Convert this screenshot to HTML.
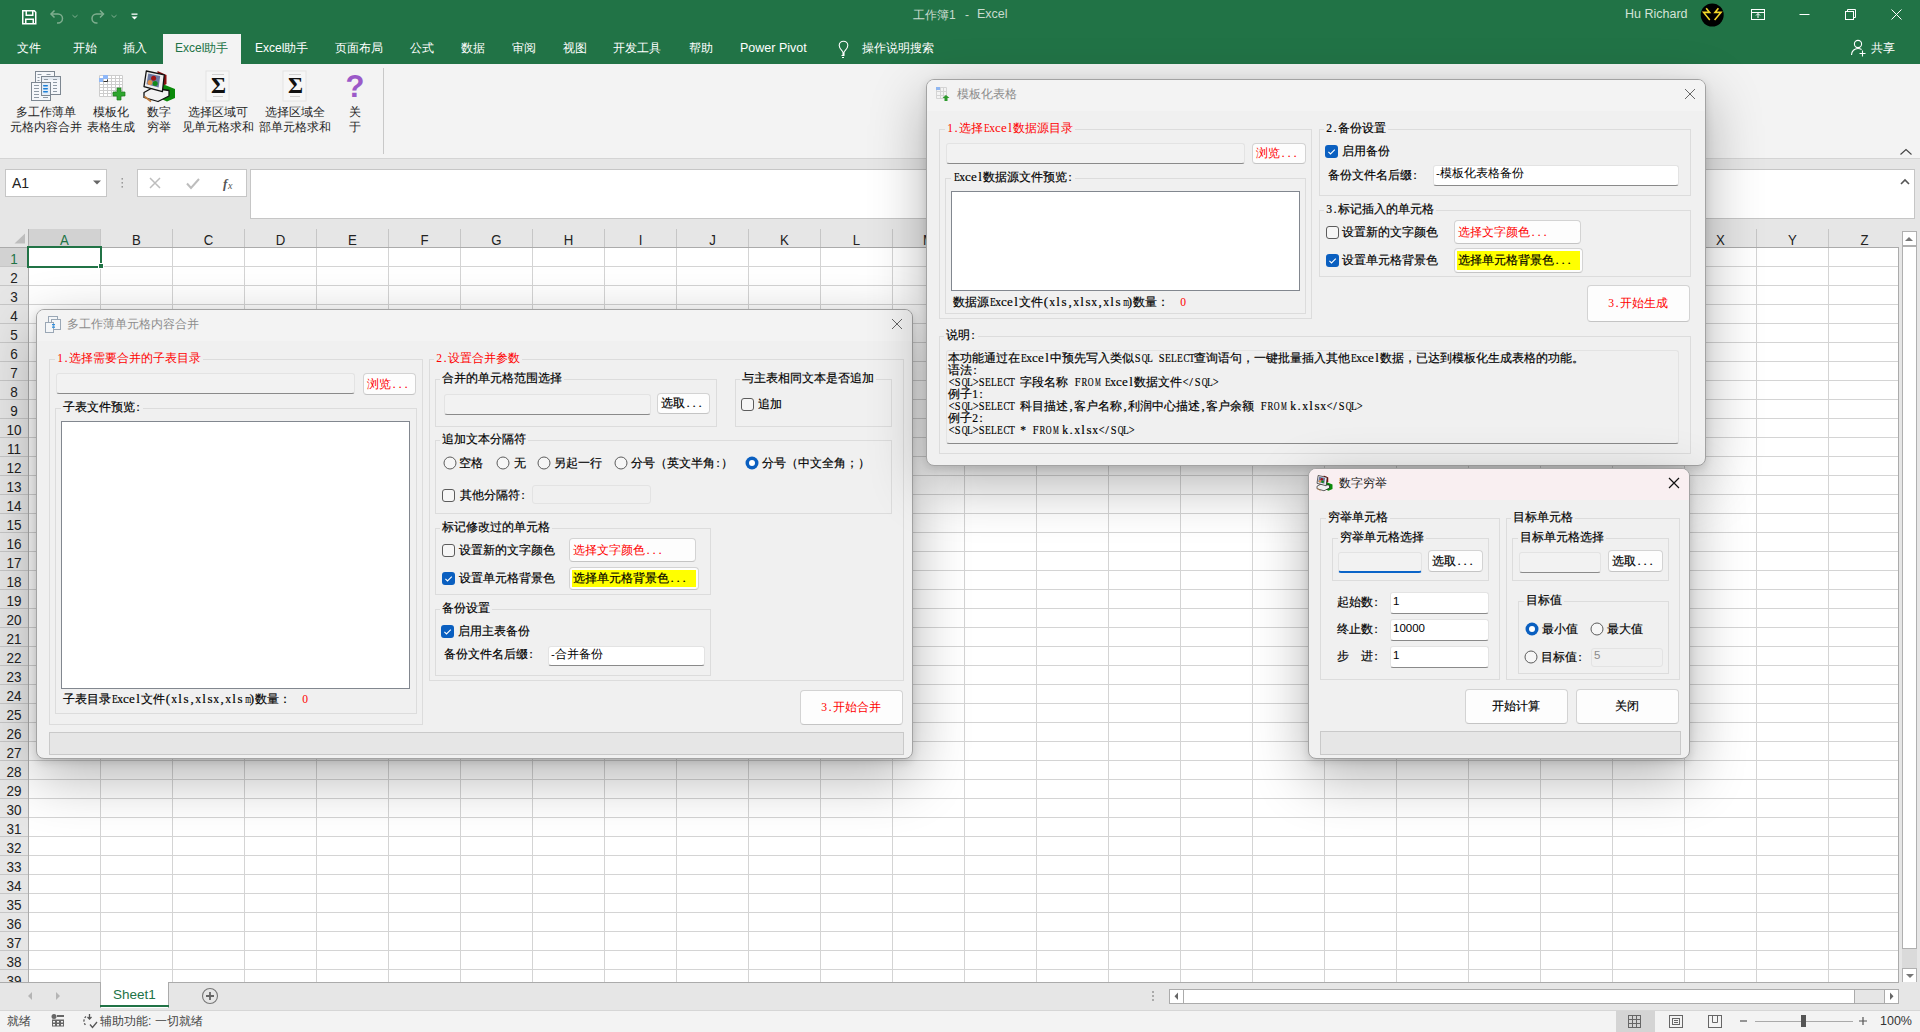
<!DOCTYPE html><html><head><meta charset="utf-8"><style>
*{margin:0;padding:0;box-sizing:border-box}
html,body{width:1920px;height:1032px;overflow:hidden;background:#fff;font-family:"Liberation Sans",sans-serif}
.b{position:absolute}
.t{position:absolute;white-space:nowrap}
.ss{-webkit-text-stroke:0.18px currentColor}
.red{-webkit-text-stroke:0}
.c{display:inline-block;width:6px;text-align:center;font-family:"Liberation Serif",serif;font-size:13px;line-height:12px;font-style:normal}
.c b{display:inline-block;font-weight:normal}
</style></head><body><div class="b" style="left:0px;top:0px;width:1920px;height:64px;background:#217346"></div>
<div class="b" style="left:163px;top:34px;width:78px;height:30px;background:#f3f3f3"></div>
<svg class="b" style="left:0;top:0" width="160" height="30" viewBox="0 0 160 30">
    <g fill="none" stroke="#fff" stroke-width="1.5">
      <path d="M22.75 10.75h11.5l1.5 1.5v11.5h-13z"/>
      <path d="M26.25 11v4.25h6.5V11"/><path d="M25.75 23.5v-4.25h7.5v4.25"/>
    </g>
    <g fill="none" stroke="#7fae8f" stroke-width="1.5">
      <path d="M54.5 10.5l-3.5 3.5 3.5 3.5"/><path d="M51.5 14h6.5a4.5 4.5 0 0 1 0 9h-1"/>
      <path d="M100 10.5l3.5 3.5-3.5 3.5"/><path d="M103 14h-6.5a4.5 4.5 0 0 0 0 9h1"/>
    </g>
    <g fill="none" stroke="#7fae8f" stroke-width="1"><path d="M72.5 15.2l2.5 2.2 2.5-2.2"/><path d="M111.5 15.2l2.5 2.2 2.5-2.2"/></g>
    <path d="M131.5 13.5h6v1.3h-6z" fill="#fff"/><path d="M131.5 16.5h6l-3 3z" fill="#fff"/>
    </svg>
<div class="t " style="left:913px;top:6.5px;font-size:12px;line-height:16px;color:#c9dbcf;">工作簿1</div>
<div class="t " style="left:965px;top:6.5px;font-size:12px;line-height:16px;color:#c9dbcf;">-</div>
<div class="t " style="left:977px;top:6.25px;font-size:12.5px;line-height:16.5px;color:#c9dbcf;">Excel</div>
<div class="t " style="left:1625px;top:6.25px;font-size:12.5px;line-height:16.5px;color:#d3e3d8;">Hu Richard</div>
<svg class="b" style="left:1700px;top:3px" width="25" height="25"><circle cx="12.2" cy="12" r="11.5" fill="#000"/>
      <g fill="none" stroke="#f2d52a" stroke-width="1.6" stroke-linejoin="miter"><path d="M6.2 5.2L9.6 9.4H3.6L9.8 17"/><path d="M18.4 5.2L15 9.4H21L14.6 17"/></g></svg>
<svg class="b" style="left:1740px;top:0" width="180" height="30"><g fill="none" stroke="#fff" stroke-width="1">
      <rect x="11.5" y="9.5" width="13" height="10"/><path d="M11.5 12.5h13"/><path d="M18 18v-4.5M16 15.5l2-2 2 2"/>
      <path d="M59.5 14.5h10"/>
      <rect x="105.5" y="11.5" width="8" height="8"/><path d="M107.5 11.5v-2h8v8h-2"/>
      <path d="M151.5 9.5l10 10M161.5 9.5l-10 10"/></g></svg>
<div class="t " style="left:17px;top:39.5px;font-size:12px;line-height:16px;color:#fff;">文件</div>
<div class="t " style="left:73px;top:39.5px;font-size:12px;line-height:16px;color:#fff;">开始</div>
<div class="t " style="left:123px;top:39.5px;font-size:12px;line-height:16px;color:#fff;">插入</div>
<div class="t " style="left:175px;top:39.5px;font-size:12px;line-height:16px;color:#217346;">Excel助手</div>
<div class="t " style="left:255px;top:39.5px;font-size:12px;line-height:16px;color:#fff;">Excel助手</div>
<div class="t " style="left:335px;top:39.5px;font-size:12px;line-height:16px;color:#fff;">页面布局</div>
<div class="t " style="left:410px;top:39.5px;font-size:12px;line-height:16px;color:#fff;">公式</div>
<div class="t " style="left:461px;top:39.5px;font-size:12px;line-height:16px;color:#fff;">数据</div>
<div class="t " style="left:512px;top:39.5px;font-size:12px;line-height:16px;color:#fff;">审阅</div>
<div class="t " style="left:563px;top:39.5px;font-size:12px;line-height:16px;color:#fff;">视图</div>
<div class="t " style="left:613px;top:39.5px;font-size:12px;line-height:16px;color:#fff;">开发工具</div>
<div class="t " style="left:689px;top:39.5px;font-size:12px;line-height:16px;color:#fff;">帮助</div>
<div class="t " style="left:740px;top:40.25px;font-size:12.5px;line-height:16.5px;color:#fff;">Power Pivot</div>
<div class="t " style="left:862px;top:39.5px;font-size:12px;line-height:16px;color:#fff;">操作说明搜索</div>
<svg class="b" style="left:834px;top:38px" width="20" height="22"><g fill="none" stroke="#fff" stroke-width="1.1">
      <path d="M9 17v-2.5c0-1.5-3.8-3.5-3.8-7a4.3 4.3 0 0 1 8.6 0c0 3.5-3.8 5.5-3.8 7V17"/><path d="M7.5 17.5h3M8 19.5h2"/></g></svg>
<svg class="b" style="left:1850px;top:38px" width="20" height="20"><g fill="none" stroke="#fff" stroke-width="1.1">
      <circle cx="8" cy="6" r="3.6"/><path d="M1.5 17c0-4 3-6.5 6.5-6.5 1.5 0 2.7.4 3.6 1"/><path d="M12.5 12.5v6M9.5 15.5h6"/></g></svg>
<div class="t " style="left:1871px;top:39.5px;font-size:12px;line-height:16px;color:#fff;">共享</div>
<div class="b" style="left:0px;top:64px;width:1920px;height:94px;background:#f3f3f3"></div>
<div class="b" style="left:0px;top:158px;width:1920px;height:1px;background:#d4d4d4"></div>
<div class="b" style="left:383px;top:68px;width:1px;height:86px;background:#c8c8c8"></div>
<div class="t" style="left:-14px;width:120px;text-align:center;top:105px;font-size:12px;line-height:15px;color:#262626">多工作薄单<br>元格内容合并</div>
<div class="t" style="left:51px;width:120px;text-align:center;top:105px;font-size:12px;line-height:15px;color:#262626">模板化<br>表格生成</div>
<div class="t" style="left:99px;width:120px;text-align:center;top:105px;font-size:12px;line-height:15px;color:#262626">数字<br>穷举</div>
<div class="t" style="left:158px;width:120px;text-align:center;top:105px;font-size:12px;line-height:15px;color:#262626">选择区域可<br>见单元格求和</div>
<div class="t" style="left:235px;width:120px;text-align:center;top:105px;font-size:12px;line-height:15px;color:#262626">选择区域全<br>部单元格求和</div>
<div class="t" style="left:295px;width:120px;text-align:center;top:105px;font-size:12px;line-height:15px;color:#262626">关<br>于</div>
<svg class="b" style="left:0;top:64px" width="380" height="44" viewBox="0 64 380 44">
    <!-- icon1: documents -->
    <g stroke="#7d8791" stroke-width="1" fill="#f5f7fa">
      <rect x="35.5" y="71.5" width="19" height="18"/></g>
    <g fill="#8e99a4"><rect x="37.5" y="74" width="4" height="1"/><rect x="46.5" y="74" width="4" height="1"/><rect x="37.5" y="77" width="2" height="1"/><rect x="37.5" y="80" width="2" height="1"/></g>
    <g stroke="#7d8791" stroke-width="1" fill="#f5f7fa"><rect x="41.5" y="76.5" width="19" height="18"/></g>
    <rect x="42" y="77" width="18" height="3" fill="#e3e9f0"/>
    <g fill="#8e99a4"><rect x="44" y="79" width="4" height="1"/><rect x="53" y="79" width="4" height="1"/><rect x="53" y="82" width="4" height="1"/><rect x="53" y="85" width="4" height="1"/><rect x="53" y="88" width="4" height="1"/><rect x="53" y="91" width="4" height="1"/></g>
    <g stroke="#7d8791" stroke-width="1" fill="#f5f7fa"><rect x="31.5" y="82.5" width="19" height="18"/></g>
    <rect x="41.5" y="82.5" width="9" height="13" fill="#f5f7fa" stroke="#7d8791"/>
    <rect x="42" y="83" width="8" height="12" fill="#e4edf7"/>
    <g fill="#8e99a4"><rect x="34" y="85" width="5" height="1"/><rect x="34" y="88" width="5" height="1"/><rect x="34" y="91" width="5" height="1"/><rect x="34" y="94" width="5" height="1"/><rect x="34" y="97" width="5" height="1"/><rect x="43" y="97" width="5" height="1"/></g>
    <g fill="#1c7fd6"><rect x="43" y="85" width="5" height="1.4" rx=".7"/><rect x="43" y="88" width="5" height="1.4" rx=".7"/><rect x="43" y="91" width="5" height="1.4" rx=".7"/></g>
    <!-- icon2: grid plus -->
    <rect x="99" y="75" width="24" height="22" fill="#fff"/>
    <g fill="none" stroke="#cdcdcd" stroke-width="1"><path d="M99.5 75.5h23v21h-23zM99.5 78.5h23M99.5 81.5h23M99.5 84.5h23M99.5 87.5h23M99.5 90.5h23M99.5 93.5h23M103.5 75.5v21M107.5 75.5v21M111.5 75.5v21M115.5 75.5v21M119.5 75.5v21"/></g>
    <rect x="103" y="75" width="5" height="4" fill="#8fb8f8"/><rect x="99" y="78" width="4" height="4" fill="#8fb8f8"/>
    <path d="M103.5 81.5h4v-2" stroke="#333" stroke-width="1" fill="none"/>
    <path d="M117 88h4v4h4v4h-4v4h-4v-4h-4v-4h4z" fill="#2ea62e" stroke="#1c7a1c" stroke-width=".7" stroke-linejoin="round"/>
    <!-- icon3: computer -->
    <path d="M157.5 71l9 4v9l-4 2.5-5-1z" fill="#8a0d0d"/>
    <path d="M162.5 84l12.5 5v9l-8 3.5-5.5-2.5z" fill="#0a8a0a"/>
    <path d="M144 92.5l8-4.5 17 2.5v5.5l-11 5.5-14-4z" fill="#f2f2f2" stroke="#111" stroke-width="1.3" stroke-linejoin="round"/>
    <path d="M144.5 96.5l6.5 5" stroke="#c07a3a" stroke-width="1.6"/>
    <path d="M146.3 71l18 3.8-1.9 16.8-18.4-5z" fill="#eeeeee" stroke="#111" stroke-width="1.3" stroke-linejoin="round"/>
    <path d="M148.3 73.6l11.9 2.5-1.6 11.5-12.1-3.4z" fill="#6b79a3"/>
    <circle cx="153.6" cy="78.3" r="2.5" fill="#a01515"/><circle cx="150" cy="82.4" r="2.5" fill="#e0904a"/><circle cx="155.2" cy="83.4" r="2.5" fill="#11881a"/>
    <!-- sigma icons -->
    <rect x="206" y="71" width="23" height="30" fill="#f6f6f6" stroke="#e4e4e4"/>
    <rect x="283" y="71" width="23" height="30" fill="#f6f6f6" stroke="#e4e4e4"/>
    <text x="218.5" y="93" text-anchor="middle" font-family="Liberation Serif" font-weight="bold" font-size="23" fill="#111">&#931;</text><g fill="#cfcfcf"><rect x="212" y="74" width="12" height="1"/><rect x="213" y="96" width="10" height="1"/><rect x="289" y="74" width="12" height="1"/><rect x="290" y="96" width="10" height="1"/></g>
    <text x="295.5" y="93" text-anchor="middle" font-family="Liberation Serif" font-weight="bold" font-size="23" fill="#111">&#931;</text>
    <!-- question -->
    <text x="355" y="96.5" text-anchor="middle" font-family="Liberation Sans" font-weight="bold" font-size="31" fill="#9b59c8">?</text>
    </svg>
<div class="b" style="left:1898px;top:148px;width:16px;height:8px;"></div>
<svg class="b" style="left:1898px;top:145px" width="16" height="12"><path d="M2.5 9.5l5.5-5 5.5 5" fill="none" stroke="#444" stroke-width="1.1"/></svg>
<div class="b" style="left:0px;top:159px;width:1920px;height:70px;background:#e6e6e6"></div>
<div class="b" style="left:5px;top:169px;width:102px;height:28px;background:#fff;border:1px solid #c6c6c6"></div>
<div class="t " style="left:12px;top:174.0px;font-size:14px;line-height:18px;color:#222;">A1</div>
<svg class="b" style="left:92px;top:179px" width="12" height="8"><path d="M1 1.5h8l-4 4z" fill="#666"/></svg>
<svg class="b" style="left:120px;top:177px" width="6" height="14"><g fill="#9a9a9a"><rect x="1.5" y="1" width="1.5" height="1.6"/><rect x="1.5" y="5" width="1.5" height="1.6"/><rect x="1.5" y="9" width="1.5" height="1.6"/></g></svg>
<div class="b" style="left:137px;top:169px;width:110px;height:28px;background:#fff;border:1px solid #c6c6c6"></div>
<svg class="b" style="left:137px;top:169px" width="110" height="28"><g fill="none" stroke="#bdbdbd" stroke-width="1.5">
      <path d="M13 9l10 10M23 9L13 19"/><path d="M50 14.5l4 4.5 8-9" stroke-width="2"/></g>
      <text x="86" y="19" font-family="Liberation Serif" font-style="italic" font-weight="bold" font-size="13" fill="#555">f</text>
      <text x="91" y="19.5" font-family="Liberation Serif" font-style="italic" font-size="10" fill="#555">x</text></svg>
<div class="b" style="left:250px;top:169px;width:1665px;height:50px;background:#fff;border:1px solid #c6c6c6"></div>
<svg class="b" style="left:1898px;top:176px" width="14" height="12"><path d="M3 8l4-4 4 4" fill="none" stroke="#555" stroke-width="1.6"/></svg>
<div class="b" style="left:0px;top:229px;width:1899px;height:19px;background:#e6e6e6"></div>
<div class="b" style="left:29px;top:229px;width:71px;height:18px;background:#d2d2d2"></div>
<div class="b" style="left:0px;top:247px;width:1899px;height:1px;background:#ababab"></div>
<svg class="b" style="left:0;top:229px" width="28" height="19"><path d="M25 4.5v10H14.5z" fill="#bdbdbd"/></svg>
<div class="b" style="left:28px;top:229px;width:1px;height:753px;background:#ababab"></div>
<div class="t" style="left:29px;width:71px;text-align:center;top:230.5px;font-size:15px;line-height:18px;transform:scaleX(.88);color:#217346">A</div>
<div class="b" style="left:100px;top:229px;width:1px;height:18px;background:#c6c6c6"></div>
<div class="t" style="left:101px;width:71px;text-align:center;top:230.5px;font-size:15px;line-height:18px;transform:scaleX(.88);color:#222">B</div>
<div class="b" style="left:172px;top:229px;width:1px;height:18px;background:#c6c6c6"></div>
<div class="t" style="left:173px;width:71px;text-align:center;top:230.5px;font-size:15px;line-height:18px;transform:scaleX(.88);color:#222">C</div>
<div class="b" style="left:244px;top:229px;width:1px;height:18px;background:#c6c6c6"></div>
<div class="t" style="left:245px;width:71px;text-align:center;top:230.5px;font-size:15px;line-height:18px;transform:scaleX(.88);color:#222">D</div>
<div class="b" style="left:316px;top:229px;width:1px;height:18px;background:#c6c6c6"></div>
<div class="t" style="left:317px;width:71px;text-align:center;top:230.5px;font-size:15px;line-height:18px;transform:scaleX(.88);color:#222">E</div>
<div class="b" style="left:388px;top:229px;width:1px;height:18px;background:#c6c6c6"></div>
<div class="t" style="left:389px;width:71px;text-align:center;top:230.5px;font-size:15px;line-height:18px;transform:scaleX(.88);color:#222">F</div>
<div class="b" style="left:460px;top:229px;width:1px;height:18px;background:#c6c6c6"></div>
<div class="t" style="left:461px;width:71px;text-align:center;top:230.5px;font-size:15px;line-height:18px;transform:scaleX(.88);color:#222">G</div>
<div class="b" style="left:532px;top:229px;width:1px;height:18px;background:#c6c6c6"></div>
<div class="t" style="left:533px;width:71px;text-align:center;top:230.5px;font-size:15px;line-height:18px;transform:scaleX(.88);color:#222">H</div>
<div class="b" style="left:604px;top:229px;width:1px;height:18px;background:#c6c6c6"></div>
<div class="t" style="left:605px;width:71px;text-align:center;top:230.5px;font-size:15px;line-height:18px;transform:scaleX(.88);color:#222">I</div>
<div class="b" style="left:676px;top:229px;width:1px;height:18px;background:#c6c6c6"></div>
<div class="t" style="left:677px;width:71px;text-align:center;top:230.5px;font-size:15px;line-height:18px;transform:scaleX(.88);color:#222">J</div>
<div class="b" style="left:748px;top:229px;width:1px;height:18px;background:#c6c6c6"></div>
<div class="t" style="left:749px;width:71px;text-align:center;top:230.5px;font-size:15px;line-height:18px;transform:scaleX(.88);color:#222">K</div>
<div class="b" style="left:820px;top:229px;width:1px;height:18px;background:#c6c6c6"></div>
<div class="t" style="left:821px;width:71px;text-align:center;top:230.5px;font-size:15px;line-height:18px;transform:scaleX(.88);color:#222">L</div>
<div class="b" style="left:892px;top:229px;width:1px;height:18px;background:#c6c6c6"></div>
<div class="t" style="left:893px;width:71px;text-align:center;top:230.5px;font-size:15px;line-height:18px;transform:scaleX(.88);color:#222">M</div>
<div class="b" style="left:964px;top:229px;width:1px;height:18px;background:#c6c6c6"></div>
<div class="t" style="left:965px;width:71px;text-align:center;top:230.5px;font-size:15px;line-height:18px;transform:scaleX(.88);color:#222">N</div>
<div class="b" style="left:1036px;top:229px;width:1px;height:18px;background:#c6c6c6"></div>
<div class="t" style="left:1037px;width:71px;text-align:center;top:230.5px;font-size:15px;line-height:18px;transform:scaleX(.88);color:#222">O</div>
<div class="b" style="left:1108px;top:229px;width:1px;height:18px;background:#c6c6c6"></div>
<div class="t" style="left:1109px;width:71px;text-align:center;top:230.5px;font-size:15px;line-height:18px;transform:scaleX(.88);color:#222">P</div>
<div class="b" style="left:1180px;top:229px;width:1px;height:18px;background:#c6c6c6"></div>
<div class="t" style="left:1181px;width:71px;text-align:center;top:230.5px;font-size:15px;line-height:18px;transform:scaleX(.88);color:#222">Q</div>
<div class="b" style="left:1252px;top:229px;width:1px;height:18px;background:#c6c6c6"></div>
<div class="t" style="left:1253px;width:71px;text-align:center;top:230.5px;font-size:15px;line-height:18px;transform:scaleX(.88);color:#222">R</div>
<div class="b" style="left:1324px;top:229px;width:1px;height:18px;background:#c6c6c6"></div>
<div class="t" style="left:1325px;width:71px;text-align:center;top:230.5px;font-size:15px;line-height:18px;transform:scaleX(.88);color:#222">S</div>
<div class="b" style="left:1396px;top:229px;width:1px;height:18px;background:#c6c6c6"></div>
<div class="t" style="left:1397px;width:71px;text-align:center;top:230.5px;font-size:15px;line-height:18px;transform:scaleX(.88);color:#222">T</div>
<div class="b" style="left:1468px;top:229px;width:1px;height:18px;background:#c6c6c6"></div>
<div class="t" style="left:1469px;width:71px;text-align:center;top:230.5px;font-size:15px;line-height:18px;transform:scaleX(.88);color:#222">U</div>
<div class="b" style="left:1540px;top:229px;width:1px;height:18px;background:#c6c6c6"></div>
<div class="t" style="left:1541px;width:71px;text-align:center;top:230.5px;font-size:15px;line-height:18px;transform:scaleX(.88);color:#222">V</div>
<div class="b" style="left:1612px;top:229px;width:1px;height:18px;background:#c6c6c6"></div>
<div class="t" style="left:1613px;width:71px;text-align:center;top:230.5px;font-size:15px;line-height:18px;transform:scaleX(.88);color:#222">W</div>
<div class="b" style="left:1684px;top:229px;width:1px;height:18px;background:#c6c6c6"></div>
<div class="t" style="left:1685px;width:71px;text-align:center;top:230.5px;font-size:15px;line-height:18px;transform:scaleX(.88);color:#222">X</div>
<div class="b" style="left:1756px;top:229px;width:1px;height:18px;background:#c6c6c6"></div>
<div class="t" style="left:1757px;width:71px;text-align:center;top:230.5px;font-size:15px;line-height:18px;transform:scaleX(.88);color:#222">Y</div>
<div class="b" style="left:1828px;top:229px;width:1px;height:18px;background:#c6c6c6"></div>
<div class="t" style="left:1829px;width:71px;text-align:center;top:230.5px;font-size:15px;line-height:18px;transform:scaleX(.88);color:#222">Z</div>
<div class="b" style="left:0px;top:248px;width:28px;height:734px;background:#e6e6e6"></div>
<div class="b" style="left:0px;top:248px;width:28px;height:18px;background:#d2d2d2"></div>
<div class="b" style="left:0px;top:266px;width:28px;height:1px;background:#c6c6c6"></div>
<div class="t" style="left:0;width:28px;text-align:center;top:249.5px;font-size:15px;line-height:18px;transform:scaleX(.9);color:#217346">1</div>
<div class="b" style="left:0px;top:285px;width:28px;height:1px;background:#c6c6c6"></div>
<div class="t" style="left:0;width:28px;text-align:center;top:268.5px;font-size:15px;line-height:18px;transform:scaleX(.9);color:#222">2</div>
<div class="b" style="left:0px;top:304px;width:28px;height:1px;background:#c6c6c6"></div>
<div class="t" style="left:0;width:28px;text-align:center;top:287.5px;font-size:15px;line-height:18px;transform:scaleX(.9);color:#222">3</div>
<div class="b" style="left:0px;top:323px;width:28px;height:1px;background:#c6c6c6"></div>
<div class="t" style="left:0;width:28px;text-align:center;top:306.5px;font-size:15px;line-height:18px;transform:scaleX(.9);color:#222">4</div>
<div class="b" style="left:0px;top:342px;width:28px;height:1px;background:#c6c6c6"></div>
<div class="t" style="left:0;width:28px;text-align:center;top:325.5px;font-size:15px;line-height:18px;transform:scaleX(.9);color:#222">5</div>
<div class="b" style="left:0px;top:361px;width:28px;height:1px;background:#c6c6c6"></div>
<div class="t" style="left:0;width:28px;text-align:center;top:344.5px;font-size:15px;line-height:18px;transform:scaleX(.9);color:#222">6</div>
<div class="b" style="left:0px;top:380px;width:28px;height:1px;background:#c6c6c6"></div>
<div class="t" style="left:0;width:28px;text-align:center;top:363.5px;font-size:15px;line-height:18px;transform:scaleX(.9);color:#222">7</div>
<div class="b" style="left:0px;top:399px;width:28px;height:1px;background:#c6c6c6"></div>
<div class="t" style="left:0;width:28px;text-align:center;top:382.5px;font-size:15px;line-height:18px;transform:scaleX(.9);color:#222">8</div>
<div class="b" style="left:0px;top:418px;width:28px;height:1px;background:#c6c6c6"></div>
<div class="t" style="left:0;width:28px;text-align:center;top:401.5px;font-size:15px;line-height:18px;transform:scaleX(.9);color:#222">9</div>
<div class="b" style="left:0px;top:437px;width:28px;height:1px;background:#c6c6c6"></div>
<div class="t" style="left:0;width:28px;text-align:center;top:420.5px;font-size:15px;line-height:18px;transform:scaleX(.9);color:#222">10</div>
<div class="b" style="left:0px;top:456px;width:28px;height:1px;background:#c6c6c6"></div>
<div class="t" style="left:0;width:28px;text-align:center;top:439.5px;font-size:15px;line-height:18px;transform:scaleX(.9);color:#222">11</div>
<div class="b" style="left:0px;top:475px;width:28px;height:1px;background:#c6c6c6"></div>
<div class="t" style="left:0;width:28px;text-align:center;top:458.5px;font-size:15px;line-height:18px;transform:scaleX(.9);color:#222">12</div>
<div class="b" style="left:0px;top:494px;width:28px;height:1px;background:#c6c6c6"></div>
<div class="t" style="left:0;width:28px;text-align:center;top:477.5px;font-size:15px;line-height:18px;transform:scaleX(.9);color:#222">13</div>
<div class="b" style="left:0px;top:513px;width:28px;height:1px;background:#c6c6c6"></div>
<div class="t" style="left:0;width:28px;text-align:center;top:496.5px;font-size:15px;line-height:18px;transform:scaleX(.9);color:#222">14</div>
<div class="b" style="left:0px;top:532px;width:28px;height:1px;background:#c6c6c6"></div>
<div class="t" style="left:0;width:28px;text-align:center;top:515.5px;font-size:15px;line-height:18px;transform:scaleX(.9);color:#222">15</div>
<div class="b" style="left:0px;top:551px;width:28px;height:1px;background:#c6c6c6"></div>
<div class="t" style="left:0;width:28px;text-align:center;top:534.5px;font-size:15px;line-height:18px;transform:scaleX(.9);color:#222">16</div>
<div class="b" style="left:0px;top:570px;width:28px;height:1px;background:#c6c6c6"></div>
<div class="t" style="left:0;width:28px;text-align:center;top:553.5px;font-size:15px;line-height:18px;transform:scaleX(.9);color:#222">17</div>
<div class="b" style="left:0px;top:589px;width:28px;height:1px;background:#c6c6c6"></div>
<div class="t" style="left:0;width:28px;text-align:center;top:572.5px;font-size:15px;line-height:18px;transform:scaleX(.9);color:#222">18</div>
<div class="b" style="left:0px;top:608px;width:28px;height:1px;background:#c6c6c6"></div>
<div class="t" style="left:0;width:28px;text-align:center;top:591.5px;font-size:15px;line-height:18px;transform:scaleX(.9);color:#222">19</div>
<div class="b" style="left:0px;top:627px;width:28px;height:1px;background:#c6c6c6"></div>
<div class="t" style="left:0;width:28px;text-align:center;top:610.5px;font-size:15px;line-height:18px;transform:scaleX(.9);color:#222">20</div>
<div class="b" style="left:0px;top:646px;width:28px;height:1px;background:#c6c6c6"></div>
<div class="t" style="left:0;width:28px;text-align:center;top:629.5px;font-size:15px;line-height:18px;transform:scaleX(.9);color:#222">21</div>
<div class="b" style="left:0px;top:665px;width:28px;height:1px;background:#c6c6c6"></div>
<div class="t" style="left:0;width:28px;text-align:center;top:648.5px;font-size:15px;line-height:18px;transform:scaleX(.9);color:#222">22</div>
<div class="b" style="left:0px;top:684px;width:28px;height:1px;background:#c6c6c6"></div>
<div class="t" style="left:0;width:28px;text-align:center;top:667.5px;font-size:15px;line-height:18px;transform:scaleX(.9);color:#222">23</div>
<div class="b" style="left:0px;top:703px;width:28px;height:1px;background:#c6c6c6"></div>
<div class="t" style="left:0;width:28px;text-align:center;top:686.5px;font-size:15px;line-height:18px;transform:scaleX(.9);color:#222">24</div>
<div class="b" style="left:0px;top:722px;width:28px;height:1px;background:#c6c6c6"></div>
<div class="t" style="left:0;width:28px;text-align:center;top:705.5px;font-size:15px;line-height:18px;transform:scaleX(.9);color:#222">25</div>
<div class="b" style="left:0px;top:741px;width:28px;height:1px;background:#c6c6c6"></div>
<div class="t" style="left:0;width:28px;text-align:center;top:724.5px;font-size:15px;line-height:18px;transform:scaleX(.9);color:#222">26</div>
<div class="b" style="left:0px;top:760px;width:28px;height:1px;background:#c6c6c6"></div>
<div class="t" style="left:0;width:28px;text-align:center;top:743.5px;font-size:15px;line-height:18px;transform:scaleX(.9);color:#222">27</div>
<div class="b" style="left:0px;top:779px;width:28px;height:1px;background:#c6c6c6"></div>
<div class="t" style="left:0;width:28px;text-align:center;top:762.5px;font-size:15px;line-height:18px;transform:scaleX(.9);color:#222">28</div>
<div class="b" style="left:0px;top:798px;width:28px;height:1px;background:#c6c6c6"></div>
<div class="t" style="left:0;width:28px;text-align:center;top:781.5px;font-size:15px;line-height:18px;transform:scaleX(.9);color:#222">29</div>
<div class="b" style="left:0px;top:817px;width:28px;height:1px;background:#c6c6c6"></div>
<div class="t" style="left:0;width:28px;text-align:center;top:800.5px;font-size:15px;line-height:18px;transform:scaleX(.9);color:#222">30</div>
<div class="b" style="left:0px;top:836px;width:28px;height:1px;background:#c6c6c6"></div>
<div class="t" style="left:0;width:28px;text-align:center;top:819.5px;font-size:15px;line-height:18px;transform:scaleX(.9);color:#222">31</div>
<div class="b" style="left:0px;top:855px;width:28px;height:1px;background:#c6c6c6"></div>
<div class="t" style="left:0;width:28px;text-align:center;top:838.5px;font-size:15px;line-height:18px;transform:scaleX(.9);color:#222">32</div>
<div class="b" style="left:0px;top:874px;width:28px;height:1px;background:#c6c6c6"></div>
<div class="t" style="left:0;width:28px;text-align:center;top:857.5px;font-size:15px;line-height:18px;transform:scaleX(.9);color:#222">33</div>
<div class="b" style="left:0px;top:893px;width:28px;height:1px;background:#c6c6c6"></div>
<div class="t" style="left:0;width:28px;text-align:center;top:876.5px;font-size:15px;line-height:18px;transform:scaleX(.9);color:#222">34</div>
<div class="b" style="left:0px;top:912px;width:28px;height:1px;background:#c6c6c6"></div>
<div class="t" style="left:0;width:28px;text-align:center;top:895.5px;font-size:15px;line-height:18px;transform:scaleX(.9);color:#222">35</div>
<div class="b" style="left:0px;top:931px;width:28px;height:1px;background:#c6c6c6"></div>
<div class="t" style="left:0;width:28px;text-align:center;top:914.5px;font-size:15px;line-height:18px;transform:scaleX(.9);color:#222">36</div>
<div class="b" style="left:0px;top:950px;width:28px;height:1px;background:#c6c6c6"></div>
<div class="t" style="left:0;width:28px;text-align:center;top:933.5px;font-size:15px;line-height:18px;transform:scaleX(.9);color:#222">37</div>
<div class="b" style="left:0px;top:969px;width:28px;height:1px;background:#c6c6c6"></div>
<div class="t" style="left:0;width:28px;text-align:center;top:952.5px;font-size:15px;line-height:18px;transform:scaleX(.9);color:#222">38</div>
<div class="b" style="left:0px;top:988px;width:28px;height:1px;background:#c6c6c6"></div>
<div class="t" style="left:0;width:28px;text-align:center;top:971.5px;font-size:15px;line-height:18px;transform:scaleX(.9);color:#222">39</div>
<div class="b" style="left:29px;top:248px;width:1870px;height:734px;background-color:#fff;background-image:linear-gradient(to right,transparent 71px,#d4d4d4 71px),linear-gradient(to bottom,transparent 18px,#d4d4d4 18px);background-size:72px 100%,100% 19px"></div>
<div class="b" style="left:27px;top:246px;width:75px;height:22px;border:2px solid #217346"></div>
<div class="b" style="left:98px;top:263px;width:6px;height:6px;background:#217346;border:1px solid #fff"></div>
<div class="b" style="left:1899px;top:229px;width:21px;height:753px;background:#e6e6e6"></div>
<div class="b" style="left:1902px;top:231px;width:15px;height:15px;background:#fff;border:1px solid #b0b0b0"></div>
<svg class="b" style="left:1902px;top:233px" width="14" height="12"><path d="M3 8l4-4 4 4z" fill="#777"/></svg>
<div class="b" style="left:1902px;top:248px;width:15px;height:720px;background:#dadada"></div>
<div class="b" style="left:1902px;top:246px;width:15px;height:703px;background:#fff;border:1px solid #b0b0b0"></div>
<div class="b" style="left:1902px;top:968px;width:15px;height:15px;background:#fff;border:1px solid #b0b0b0"></div>
<svg class="b" style="left:1903px;top:970px" width="14" height="12"><path d="M3 4h8l-4 4z" fill="#777"/></svg>
<div class="b" style="left:1898px;top:248px;width:1px;height:734px;background:#ababab"></div>
<div class="b" style="left:0px;top:982px;width:1920px;height:28px;background:#e6e6e6"></div>
<div class="b" style="left:0px;top:982px;width:1899px;height:1px;background:#ababab"></div>
<svg class="b" style="left:20px;top:988px" width="50" height="16"><path d="M12 4v8l-4-4z" fill="#b5b5b5"/><path d="M56 4v8l4-4z" fill="#b5b5b5" transform="translate(-0,0)"/></svg>
<svg class="b" style="left:50px;top:988px" width="16" height="16"><path d="M6 4v8l4-4z" fill="#b5b5b5"/></svg>
<div class="b" style="left:100px;top:982px;width:69px;height:26px;background:#fff;border-left:1px solid #ababab;border-right:1px solid #ababab"></div>
<div class="b" style="left:100px;top:1005px;width:69px;height:2px;background:#217346"></div>
<div class="t " style="left:113px;top:986.25px;font-size:13.5px;line-height:17.5px;color:#217346;">Sheet1</div>
<svg class="b" style="left:200px;top:986px" width="20" height="20"><circle cx="10" cy="10" r="7.5" fill="none" stroke="#777" stroke-width="1.1"/><path d="M10 6v8M6 10h8" stroke="#666" stroke-width="1.8"/></svg>
<svg class="b" style="left:1148px;top:988px" width="10" height="16"><g fill="#aaa"><rect x="4" y="3" width="2" height="2"/><rect x="4" y="7" width="2" height="2"/><rect x="4" y="11" width="2" height="2"/></g></svg>
<div class="b" style="left:1169px;top:989px;width:730px;height:15px;background:#e6e6e6;border:1px solid #ababab"></div>
<div class="b" style="left:1183px;top:989px;width:672px;height:15px;background:#fff;border:1px solid #ababab"></div>
<div class="b" style="left:1169px;top:989px;width:15px;height:15px;background:#fff;border:1px solid #ababab"></div>
<div class="b" style="left:1884px;top:989px;width:15px;height:15px;background:#fff;border:1px solid #ababab"></div>
<svg class="b" style="left:1169px;top:989px" width="15" height="15"><path d="M9 3.5v7.5l-3.5-3.75z" fill="#666"/></svg>
<svg class="b" style="left:1884px;top:989px" width="15" height="15"><path d="M6 3.5v7.5l3.5-3.75z" fill="#666"/></svg>
<div class="b" style="left:0px;top:1010px;width:1920px;height:22px;background:#f3f3f3"></div>
<div class="b" style="left:0px;top:1010px;width:1920px;height:1px;background:#d6d6d6"></div>
<div class="t " style="left:7px;top:1013.0px;font-size:12px;line-height:16px;color:#444;">就绪</div>
<svg class="b" style="left:50px;top:1013px" width="16" height="16"><g fill="#666"><circle cx="4" cy="3.5" r="2.5"/><path d="M7 2h7v2H7zM2 6.5h12v7H2z"/></g><g fill="#f3f3f3"><rect x="3" y="8" width="2" height="1.5"/><rect x="7" y="8" width="2" height="1.5"/><rect x="11" y="8" width="2" height="1.5"/><rect x="3" y="11" width="2" height="1.5"/><rect x="7" y="11" width="2" height="1.5"/><rect x="11" y="11" width="2" height="1.5"/></g></svg>
<svg class="b" style="left:81px;top:1012px" width="18" height="18"><g fill="none" stroke="#555" stroke-width="1.3"><path d="M5 4.5a6 6 0 0 0 0 9" stroke-dasharray="2 1.5"/><path d="M8.5 2v5M6.5 5l2 2 2-2"/><path d="M9 12.5l2.5 3 4.5-5.5"/></g></svg>
<div class="t " style="left:100px;top:1013.0px;font-size:12px;line-height:16px;color:#444;">辅助功能: 一切就绪</div>
<div class="b" style="left:1616px;top:1011px;width:39px;height:21px;background:#d4d4d4"></div>
<svg class="b" style="left:1622px;top:1010px" width="110" height="22"><g fill="none" stroke="#666" stroke-width="1">
      <rect x="6.5" y="5.5" width="12" height="12"/><path d="M6.5 9.5h12M6.5 13.5h12M10.5 5.5v12M14.5 5.5v12"/>
      <rect x="47.5" y="5.5" width="13" height="12"/><rect x="50.5" y="8.5" width="7" height="6"/><path d="M52 10.5h4M52 12.5h4"/>
      <rect x="86.5" y="5.5" width="13" height="12"/><path d="M90.5 5.5v7h5v-7"/></g></svg>
<svg class="b" style="left:1736px;top:1010px" width="140" height="22"><g stroke="#555" stroke-width="1.2" fill="none">
      <path d="M4 11h7"/><path d="M123 11h8M127 7v8"/></g><path d="M19 11.5h98" stroke="#aaa" stroke-width="1"/><rect x="65" y="5" width="5" height="12" fill="#555"/></svg>
<div class="t " style="left:1880px;top:1012.75px;font-size:12.5px;line-height:16.5px;color:#333;">100%</div>
<div class="b" style="left:36px;top:309px;width:877px;height:450px;background:#f0f0f0;border:1px solid #a3a3a3;border-radius:8px;box-shadow:0 18px 56px rgba(0,0,0,0.30),0 3px 9px rgba(0,0,0,0.13);overflow:hidden"><div class="b" style="left:0;top:0;right:0;height:31px;background:#f3f3f3"></div></div>
<div class="t " style="left:67px;top:315.5px;font-size:12px;line-height:16px;color:#8c8c8c;">多工作薄单元格内容合并</div>
<svg class="b" style="left:45px;top:316px" width="18" height="18"><g stroke="#9aa7b5" stroke-width="1" fill="#f4f6f8">
    <rect x="3.5" y="0.5" width="9" height="11"/><rect x="6.5" y="3.5" width="9" height="10"/><rect x="0.5" y="6.5" width="8" height="10"/></g>
    <g fill="#2f8fe0"><rect x="7" y="8" width="3" height="1.3"/><rect x="7" y="10.5" width="3" height="1.3"/></g></svg>
<svg class="b" style="left:891px;top:318px" width="12" height="12"><path d="M1 1l10 10M11 1L1 11" stroke="#666" stroke-width="1"/></svg>
<div class="b" style="left:49px;top:359px;width:374px;height:366px;border:1px solid #dcdcdc"></div>
<div class="b" style="left:55px;top:353px;width:148px;height:12px;background:#f0f0f0"></div>
<div class="t ss red" style="left:57px;top:350.0px;font-size:12px;line-height:16px;color:#ff0000;"><i class="c"><b style="transform:scaleX(0.89)">1</b></i><i class="c"><b>.</b></i>选择需要合并的子表目录</div>
<div class="b" style="left:56px;top:373px;width:299px;height:21px;background:#f2f2f2;border:1px solid #e3e3e3;border-bottom:1px solid #8a8a8a;border-radius:3px"></div>
<div class="b" style="left:363px;top:373px;width:53px;height:22px;background:#fdfdfd;border:1px solid #d3d3d3;border-bottom-color:#c4c4c4;border-radius:4px"></div>
<div class="t ss red" style="left:367px;top:375.5px;font-size:12px;line-height:16px;color:#ff0000;">浏览<i class="c"><b>.</b></i><i class="c"><b>.</b></i><i class="c"><b>.</b></i></div>
<div class="b" style="left:55px;top:408px;width:362px;height:306px;border:1px solid #dcdcdc"></div>
<div class="b" style="left:61px;top:402px;width:82px;height:12px;background:#f0f0f0"></div>
<div class="t ss" style="left:63px;top:399.0px;font-size:12px;line-height:16px;color:#000;">子表文件预览<i class="c"><b>:</b></i></div>
<div class="b" style="left:61px;top:421px;width:349px;height:268px;background:#fff;border:1px solid #82878f"></div>
<div class="t ss" style="left:63px;top:691.0px;font-size:12px;line-height:16px;color:#000;">子表目录<i class="c"><b style="transform:scaleX(0.73)">E</b></i><i class="c"><b style="transform:scaleX(0.89)">x</b></i><i class="c"><b>c</b></i><i class="c"><b>e</b></i><i class="c"><b>l</b></i>文件<i class="c"><b>(</b></i><i class="c"><b style="transform:scaleX(0.89)">x</b></i><i class="c"><b>l</b></i><i class="c"><b>s</b></i><i class="c"><b>,</b></i><i class="c"><b style="transform:scaleX(0.89)">x</b></i><i class="c"><b>l</b></i><i class="c"><b>s</b></i><i class="c"><b style="transform:scaleX(0.89)">x</b></i><i class="c"><b>,</b></i><i class="c"><b style="transform:scaleX(0.89)">x</b></i><i class="c"><b>l</b></i><i class="c"><b>s</b></i><i class="c"><b style="transform:scaleX(0.57)">m</b></i><i class="c"><b>)</b></i>数量：</div>
<div class="t ss red" style="left:302px;top:691.0px;font-size:12px;line-height:16px;color:#ff0000;"><i class="c"><b style="transform:scaleX(0.89)">0</b></i></div>
<div class="b" style="left:429px;top:359px;width:475px;height:322px;border:1px solid #dcdcdc"></div>
<div class="b" style="left:434px;top:353px;width:88px;height:12px;background:#f0f0f0"></div>
<div class="t ss red" style="left:436px;top:350.0px;font-size:12px;line-height:16px;color:#ff0000;"><i class="c"><b style="transform:scaleX(0.89)">2</b></i><i class="c"><b>.</b></i>设置合并参数</div>
<div class="b" style="left:435px;top:379px;width:282px;height:48px;border:1px solid #dcdcdc"></div>
<div class="b" style="left:440px;top:373px;width:124px;height:12px;background:#f0f0f0"></div>
<div class="t ss" style="left:442px;top:370.0px;font-size:12px;line-height:16px;color:#000;">合并的单元格范围选择</div>
<div class="b" style="left:444px;top:394px;width:207px;height:21px;background:#f2f2f2;border:1px solid #e3e3e3;border-bottom:1px solid #8a8a8a;border-radius:3px"></div>
<div class="b" style="left:657px;top:393px;width:53px;height:21px;background:#fdfdfd;border:1px solid #d3d3d3;border-bottom-color:#c4c4c4;border-radius:4px"></div>
<div class="t ss" style="left:661px;top:395.0px;font-size:12px;line-height:16px;color:#000;">选取<i class="c"><b>.</b></i><i class="c"><b>.</b></i><i class="c"><b>.</b></i></div>
<div class="b" style="left:735px;top:379px;width:157px;height:48px;border:1px solid #dcdcdc"></div>
<div class="b" style="left:740px;top:373px;width:136px;height:12px;background:#f0f0f0"></div>
<div class="t ss" style="left:742px;top:370.0px;font-size:12px;line-height:16px;color:#000;">与主表相同文本是否追加</div>
<svg class="b" style="left:741px;top:398px" width="13" height="13"><rect x="0.5" y="0.5" width="12" height="12" rx="2.5" fill="#f6f6f6" stroke="#5c5c5c"/></svg>
<div class="t ss" style="left:758px;top:396.0px;font-size:12px;line-height:16px;color:#000;">追加</div>
<div class="b" style="left:435px;top:440px;width:457px;height:74px;border:1px solid #dcdcdc"></div>
<div class="b" style="left:440px;top:434px;width:88px;height:12px;background:#f0f0f0"></div>
<div class="t ss" style="left:442px;top:431.0px;font-size:12px;line-height:16px;color:#000;">追加文本分隔符</div>
<svg class="b" style="left:443px;top:456px" width="14" height="14"><circle cx="7" cy="7" r="6" fill="#f6f6f6" stroke="#5c5c5c"/></svg>
<div class="t ss" style="left:459px;top:455.0px;font-size:12px;line-height:16px;color:#000;">空格</div>
<svg class="b" style="left:496px;top:456px" width="14" height="14"><circle cx="7" cy="7" r="6" fill="#f6f6f6" stroke="#5c5c5c"/></svg>
<div class="t ss" style="left:514px;top:455.0px;font-size:12px;line-height:16px;color:#000;">无</div>
<svg class="b" style="left:537px;top:456px" width="14" height="14"><circle cx="7" cy="7" r="6" fill="#f6f6f6" stroke="#5c5c5c"/></svg>
<div class="t ss" style="left:554px;top:455.0px;font-size:12px;line-height:16px;color:#000;">另起一行</div>
<svg class="b" style="left:614px;top:456px" width="14" height="14"><circle cx="7" cy="7" r="6" fill="#f6f6f6" stroke="#5c5c5c"/></svg>
<div class="t ss" style="left:631px;top:455.0px;font-size:12px;line-height:16px;color:#000;">分号（英文半角<i class="c"><b>:</b></i>）</div>
<svg class="b" style="left:745px;top:456px" width="14" height="14"><circle cx="7" cy="7" r="6.5" fill="#0a5fc0"/><circle cx="7" cy="7" r="3" fill="#fff"/></svg>
<div class="t ss" style="left:762px;top:455.0px;font-size:12px;line-height:16px;color:#000;">分号（中文全角；）</div>
<svg class="b" style="left:442px;top:489px" width="13" height="13"><rect x="0.5" y="0.5" width="12" height="12" rx="2.5" fill="#f6f6f6" stroke="#5c5c5c"/></svg>
<div class="t ss" style="left:460px;top:487.0px;font-size:12px;line-height:16px;color:#000;">其他分隔符<i class="c"><b>:</b></i></div>
<div class="b" style="left:532px;top:485px;width:119px;height:19px;background:#f0f0f0;border:1px solid #e3e3e3;border-bottom:1px solid #e3e3e3;border-radius:3px"></div>
<div class="b" style="left:435px;top:528px;width:276px;height:67px;border:1px solid #dcdcdc"></div>
<div class="b" style="left:440px;top:522px;width:112px;height:12px;background:#f0f0f0"></div>
<div class="t ss" style="left:442px;top:519.0px;font-size:12px;line-height:16px;color:#000;">标记修改过的单元格</div>
<svg class="b" style="left:442px;top:544px" width="13" height="13"><rect x="0.5" y="0.5" width="12" height="12" rx="2.5" fill="#f6f6f6" stroke="#5c5c5c"/></svg>
<div class="t ss" style="left:459px;top:542.0px;font-size:12px;line-height:16px;color:#000;">设置新的文字颜色</div>
<div class="b" style="left:569px;top:538px;width:127px;height:24px;background:#fdfdfd;border:1px solid #d3d3d3;border-bottom-color:#c4c4c4;border-radius:4px"></div>
<div class="t ss red" style="left:573px;top:541.5px;font-size:12px;line-height:16px;color:#ff0000;">选择文字颜色<i class="c"><b>.</b></i><i class="c"><b>.</b></i><i class="c"><b>.</b></i></div>
<svg class="b" style="left:442px;top:572px" width="13" height="13"><rect x="0" y="0" width="13" height="13" rx="3" fill="#0a5fc0"/><path d="M3.4 6.8l2.1 2.1 4.3-4.3" fill="none" stroke="#fff" stroke-width="1.1"/></svg>
<div class="t ss" style="left:459px;top:570.0px;font-size:12px;line-height:16px;color:#000;">设置单元格背景色</div>
<div class="b" style="left:569px;top:567px;width:130px;height:23px;background:#fdfdfd;border:1px solid #d3d3d3;border-bottom-color:#c4c4c4;border-radius:4px"></div>
<div class="b" style="left:572px;top:570px;width:124px;height:17px;background:#ffff00"></div>
<div class="t ss" style="left:573px;top:570.0px;font-size:12px;line-height:16px;color:#000;">选择单元格背景色<i class="c"><b>.</b></i><i class="c"><b>.</b></i><i class="c"><b>.</b></i></div>
<div class="b" style="left:435px;top:609px;width:276px;height:67px;border:1px solid #dcdcdc"></div>
<div class="b" style="left:440px;top:603px;width:52px;height:12px;background:#f0f0f0"></div>
<div class="t ss" style="left:442px;top:600.0px;font-size:12px;line-height:16px;color:#000;">备份设置</div>
<svg class="b" style="left:441px;top:625px" width="13" height="13"><rect x="0" y="0" width="13" height="13" rx="3" fill="#0a5fc0"/><path d="M3.4 6.8l2.1 2.1 4.3-4.3" fill="none" stroke="#fff" stroke-width="1.1"/></svg>
<div class="t ss" style="left:458px;top:623.0px;font-size:12px;line-height:16px;color:#000;">启用主表备份</div>
<div class="t ss" style="left:444px;top:646.0px;font-size:12px;line-height:16px;color:#000;">备份文件名后缀<i class="c"><b>:</b></i></div>
<div class="b" style="left:548px;top:646px;width:157px;height:20px;background:#fff;border:1px solid #e3e3e3;border-bottom:1px solid #8a8a8a;border-radius:3px"></div>
<div class="t " style="left:551px;top:646.75px;font-size:11.5px;line-height:15.5px;color:#000;">-合并备份</div>
<div class="b" style="left:800px;top:690px;width:103px;height:35px;background:#fdfdfd;border:1px solid #d3d3d3;border-bottom-color:#c4c4c4;border-radius:4px"></div>
<div class="t ss red" style="left:821.0px;top:699.0px;font-size:12px;line-height:16px;color:#ff0000;"><i class="c"><b style="transform:scaleX(0.89)">3</b></i><i class="c"><b>.</b></i>开始合并</div>
<div class="b" style="left:49px;top:732px;width:855px;height:23px;background:#e6e6e6;border:1px solid #c9c9c9"></div>
<div class="b" style="left:926px;top:79px;width:780px;height:387px;background:#f0f0f0;border:1px solid #a3a3a3;border-radius:8px;box-shadow:0 18px 56px rgba(0,0,0,0.30),0 3px 9px rgba(0,0,0,0.13);overflow:hidden"><div class="b" style="left:0;top:0;right:0;height:31px;background:#f3f3f3"></div></div>
<div class="t " style="left:957px;top:85.5px;font-size:12px;line-height:16px;color:#8c8c8c;">模板化表格</div>
<svg class="b" style="left:935px;top:86px" width="18" height="18"><g fill="none" stroke="#d4d4d4" stroke-width="1">
    <path d="M1.5 1.5h10v11h-10zM1.5 5.5h10M1.5 9.5h10M5.5 1.5v11M8.5 1.5v11"/></g><rect x="1" y="1" width="4" height="3" fill="#8fb6f0"/>
    <path d="M11 9l3.5 3h-2v3h-3v-3h-2z" fill="#2c9a2c"/></svg>
<svg class="b" style="left:1684px;top:88px" width="12" height="12"><path d="M1 1l10 10M11 1L1 11" stroke="#666" stroke-width="1"/></svg>
<div class="b" style="left:939px;top:129px;width:373px;height:190px;border:1px solid #dcdcdc"></div>
<div class="b" style="left:945px;top:123px;width:130px;height:12px;background:#f0f0f0"></div>
<div class="t ss red" style="left:947px;top:120.0px;font-size:12px;line-height:16px;color:#ff0000;"><i class="c"><b style="transform:scaleX(0.89)">1</b></i><i class="c"><b>.</b></i>选择<i class="c"><b style="transform:scaleX(0.73)">E</b></i><i class="c"><b style="transform:scaleX(0.89)">x</b></i><i class="c"><b>c</b></i><i class="c"><b>e</b></i><i class="c"><b>l</b></i>数据源目录</div>
<div class="b" style="left:946px;top:143px;width:299px;height:21px;background:#f2f2f2;border:1px solid #e3e3e3;border-bottom:1px solid #8a8a8a;border-radius:3px"></div>
<div class="b" style="left:1252px;top:143px;width:54px;height:21px;background:#fdfdfd;border:1px solid #d3d3d3;border-bottom-color:#c4c4c4;border-radius:4px"></div>
<div class="t ss red" style="left:1256px;top:145.0px;font-size:12px;line-height:16px;color:#ff0000;">浏览<i class="c"><b>.</b></i><i class="c"><b>.</b></i><i class="c"><b>.</b></i></div>
<div class="b" style="left:945px;top:178px;width:361px;height:136px;border:1px solid #dcdcdc"></div>
<div class="b" style="left:951px;top:172px;width:124px;height:12px;background:#f0f0f0"></div>
<div class="t ss" style="left:953px;top:169.0px;font-size:12px;line-height:16px;color:#000;"><i class="c"><b style="transform:scaleX(0.73)">E</b></i><i class="c"><b style="transform:scaleX(0.89)">x</b></i><i class="c"><b>c</b></i><i class="c"><b>e</b></i><i class="c"><b>l</b></i>数据源文件预览<i class="c"><b>:</b></i></div>
<div class="b" style="left:951px;top:191px;width:349px;height:100px;background:#fff;border:1px solid #82878f"></div>
<div class="t ss" style="left:953px;top:294.0px;font-size:12px;line-height:16px;color:#000;">数据源<i class="c"><b style="transform:scaleX(0.73)">E</b></i><i class="c"><b style="transform:scaleX(0.89)">x</b></i><i class="c"><b>c</b></i><i class="c"><b>e</b></i><i class="c"><b>l</b></i>文件<i class="c"><b>(</b></i><i class="c"><b style="transform:scaleX(0.89)">x</b></i><i class="c"><b>l</b></i><i class="c"><b>s</b></i><i class="c"><b>,</b></i><i class="c"><b style="transform:scaleX(0.89)">x</b></i><i class="c"><b>l</b></i><i class="c"><b>s</b></i><i class="c"><b style="transform:scaleX(0.89)">x</b></i><i class="c"><b>,</b></i><i class="c"><b style="transform:scaleX(0.89)">x</b></i><i class="c"><b>l</b></i><i class="c"><b>s</b></i><i class="c"><b style="transform:scaleX(0.57)">m</b></i><i class="c"><b>)</b></i>数量：</div>
<div class="t ss red" style="left:1180px;top:294.0px;font-size:12px;line-height:16px;color:#ff0000;"><i class="c"><b style="transform:scaleX(0.89)">0</b></i></div>
<div class="b" style="left:1319px;top:129px;width:372px;height:67px;border:1px solid #dcdcdc"></div>
<div class="b" style="left:1324px;top:123px;width:64px;height:12px;background:#f0f0f0"></div>
<div class="t ss" style="left:1326px;top:120.0px;font-size:12px;line-height:16px;color:#000;"><i class="c"><b style="transform:scaleX(0.89)">2</b></i><i class="c"><b>.</b></i>备份设置</div>
<svg class="b" style="left:1325px;top:145px" width="13" height="13"><rect x="0" y="0" width="13" height="13" rx="3" fill="#0a5fc0"/><path d="M3.4 6.8l2.1 2.1 4.3-4.3" fill="none" stroke="#fff" stroke-width="1.1"/></svg>
<div class="t ss" style="left:1342px;top:143.0px;font-size:12px;line-height:16px;color:#000;">启用备份</div>
<div class="t ss" style="left:1328px;top:167.0px;font-size:12px;line-height:16px;color:#000;">备份文件名后缀<i class="c"><b>:</b></i></div>
<div class="b" style="left:1433px;top:165px;width:246px;height:21px;background:#fff;border:1px solid #e3e3e3;border-bottom:1px solid #8a8a8a;border-radius:3px"></div>
<div class="t " style="left:1436px;top:166.25px;font-size:11.5px;line-height:15.5px;color:#000;">-模板化表格备份</div>
<div class="b" style="left:1319px;top:210px;width:372px;height:67px;border:1px solid #dcdcdc"></div>
<div class="b" style="left:1324px;top:204px;width:112px;height:12px;background:#f0f0f0"></div>
<div class="t ss" style="left:1326px;top:201.0px;font-size:12px;line-height:16px;color:#000;"><i class="c"><b style="transform:scaleX(0.89)">3</b></i><i class="c"><b>.</b></i>标记插入的单元格</div>
<svg class="b" style="left:1326px;top:226px" width="13" height="13"><rect x="0.5" y="0.5" width="12" height="12" rx="2.5" fill="#f6f6f6" stroke="#5c5c5c"/></svg>
<div class="t ss" style="left:1342px;top:224.0px;font-size:12px;line-height:16px;color:#000;">设置新的文字颜色</div>
<div class="b" style="left:1454px;top:220px;width:127px;height:24px;background:#fdfdfd;border:1px solid #d3d3d3;border-bottom-color:#c4c4c4;border-radius:4px"></div>
<div class="t ss red" style="left:1458px;top:223.5px;font-size:12px;line-height:16px;color:#ff0000;">选择文字颜色<i class="c"><b>.</b></i><i class="c"><b>.</b></i><i class="c"><b>.</b></i></div>
<svg class="b" style="left:1326px;top:254px" width="13" height="13"><rect x="0" y="0" width="13" height="13" rx="3" fill="#0a5fc0"/><path d="M3.4 6.8l2.1 2.1 4.3-4.3" fill="none" stroke="#fff" stroke-width="1.1"/></svg>
<div class="t ss" style="left:1342px;top:252.0px;font-size:12px;line-height:16px;color:#000;">设置单元格背景色</div>
<div class="b" style="left:1454px;top:248px;width:129px;height:25px;background:#fdfdfd;border:1px solid #d3d3d3;border-bottom-color:#c4c4c4;border-radius:4px"></div>
<div class="b" style="left:1457px;top:251px;width:123px;height:19px;background:#ffff00"></div>
<div class="t ss" style="left:1458px;top:252.0px;font-size:12px;line-height:16px;color:#000;">选择单元格背景色<i class="c"><b>.</b></i><i class="c"><b>.</b></i><i class="c"><b>.</b></i></div>
<div class="b" style="left:1587px;top:285px;width:103px;height:37px;background:#fdfdfd;border:1px solid #d3d3d3;border-bottom-color:#c4c4c4;border-radius:4px"></div>
<div class="t ss red" style="left:1608.0px;top:295.0px;font-size:12px;line-height:16px;color:#ff0000;"><i class="c"><b style="transform:scaleX(0.89)">3</b></i><i class="c"><b>.</b></i>开始生成</div>
<div class="b" style="left:939px;top:336px;width:752px;height:118px;border:1px solid #dcdcdc"></div>
<div class="b" style="left:944px;top:330px;width:34px;height:12px;background:#f0f0f0"></div>
<div class="t ss" style="left:946px;top:327.0px;font-size:12px;line-height:16px;color:#000;">说明<i class="c"><b>:</b></i></div>
<div class="b" style="left:946px;top:350px;width:733px;height:94px;background:#f0f0f0;border:1px solid #e3e3e3;border-bottom:1px solid #8a8a8a;border-radius:3px"></div>
<div class="t ss" style="left:948px;top:350.0px;font-size:12px;line-height:16px;color:#000;">本功能通过在<i class="c"><b style="transform:scaleX(0.73)">E</b></i><i class="c"><b style="transform:scaleX(0.89)">x</b></i><i class="c"><b>c</b></i><i class="c"><b>e</b></i><i class="c"><b>l</b></i>中预先写入类似<i class="c"><b style="transform:scaleX(0.8)">S</b></i><i class="c"><b style="transform:scaleX(0.62)">Q</b></i><i class="c"><b style="transform:scaleX(0.73)">L</b></i><i class="c">&nbsp;</i><i class="c"><b style="transform:scaleX(0.8)">S</b></i><i class="c"><b style="transform:scaleX(0.73)">E</b></i><i class="c"><b style="transform:scaleX(0.73)">L</b></i><i class="c"><b style="transform:scaleX(0.73)">E</b></i><i class="c"><b style="transform:scaleX(0.67)">C</b></i><i class="c"><b style="transform:scaleX(0.73)">T</b></i>查询语句，一键批量插入其他<i class="c"><b style="transform:scaleX(0.73)">E</b></i><i class="c"><b style="transform:scaleX(0.89)">x</b></i><i class="c"><b>c</b></i><i class="c"><b>e</b></i><i class="c"><b>l</b></i>数据，已达到模板化生成表格的功能。</div>
<div class="t ss" style="left:948px;top:362.0px;font-size:12px;line-height:16px;color:#000;">语法<i class="c"><b>:</b></i></div>
<div class="t ss" style="left:948px;top:374.0px;font-size:12px;line-height:16px;color:#000;"><i class="c"><b style="transform:scaleX(0.79)">&lt;</b></i><i class="c"><b style="transform:scaleX(0.8)">S</b></i><i class="c"><b style="transform:scaleX(0.62)">Q</b></i><i class="c"><b style="transform:scaleX(0.73)">L</b></i><i class="c"><b style="transform:scaleX(0.79)">&gt;</b></i><i class="c"><b style="transform:scaleX(0.8)">S</b></i><i class="c"><b style="transform:scaleX(0.73)">E</b></i><i class="c"><b style="transform:scaleX(0.73)">L</b></i><i class="c"><b style="transform:scaleX(0.73)">E</b></i><i class="c"><b style="transform:scaleX(0.67)">C</b></i><i class="c"><b style="transform:scaleX(0.73)">T</b></i><i class="c">&nbsp;</i>字段名称<i class="c">&nbsp;</i><i class="c"><b style="transform:scaleX(0.8)">F</b></i><i class="c"><b style="transform:scaleX(0.67)">R</b></i><i class="c"><b style="transform:scaleX(0.62)">O</b></i><i class="c"><b style="transform:scaleX(0.5)">M</b></i><i class="c">&nbsp;</i><i class="c"><b style="transform:scaleX(0.73)">E</b></i><i class="c"><b style="transform:scaleX(0.89)">x</b></i><i class="c"><b>c</b></i><i class="c"><b>e</b></i><i class="c"><b>l</b></i>数据文件<i class="c"><b style="transform:scaleX(0.79)">&lt;</b></i><i class="c"><b>/</b></i><i class="c"><b style="transform:scaleX(0.8)">S</b></i><i class="c"><b style="transform:scaleX(0.62)">Q</b></i><i class="c"><b style="transform:scaleX(0.73)">L</b></i><i class="c"><b style="transform:scaleX(0.79)">&gt;</b></i></div>
<div class="t ss" style="left:948px;top:386.0px;font-size:12px;line-height:16px;color:#000;">例子<i class="c"><b style="transform:scaleX(0.89)">1</b></i><i class="c"><b>:</b></i></div>
<div class="t ss" style="left:948px;top:398.0px;font-size:12px;line-height:16px;color:#000;"><i class="c"><b style="transform:scaleX(0.79)">&lt;</b></i><i class="c"><b style="transform:scaleX(0.8)">S</b></i><i class="c"><b style="transform:scaleX(0.62)">Q</b></i><i class="c"><b style="transform:scaleX(0.73)">L</b></i><i class="c"><b style="transform:scaleX(0.79)">&gt;</b></i><i class="c"><b style="transform:scaleX(0.8)">S</b></i><i class="c"><b style="transform:scaleX(0.73)">E</b></i><i class="c"><b style="transform:scaleX(0.73)">L</b></i><i class="c"><b style="transform:scaleX(0.73)">E</b></i><i class="c"><b style="transform:scaleX(0.67)">C</b></i><i class="c"><b style="transform:scaleX(0.73)">T</b></i><i class="c">&nbsp;</i>科目描述<i class="c"><b>,</b></i>客户名称<i class="c"><b>,</b></i>利润中心描述<i class="c"><b>,</b></i>客户余额<i class="c">&nbsp;</i><i class="c"><b style="transform:scaleX(0.8)">F</b></i><i class="c"><b style="transform:scaleX(0.67)">R</b></i><i class="c"><b style="transform:scaleX(0.62)">O</b></i><i class="c"><b style="transform:scaleX(0.5)">M</b></i><i class="c">&nbsp;</i><i class="c"><b style="transform:scaleX(0.89)">k</b></i><i class="c"><b>.</b></i><i class="c"><b style="transform:scaleX(0.89)">x</b></i><i class="c"><b>l</b></i><i class="c"><b>s</b></i><i class="c"><b style="transform:scaleX(0.89)">x</b></i><i class="c"><b style="transform:scaleX(0.79)">&lt;</b></i><i class="c"><b>/</b></i><i class="c"><b style="transform:scaleX(0.8)">S</b></i><i class="c"><b style="transform:scaleX(0.62)">Q</b></i><i class="c"><b style="transform:scaleX(0.73)">L</b></i><i class="c"><b style="transform:scaleX(0.79)">&gt;</b></i></div>
<div class="t ss" style="left:948px;top:410.0px;font-size:12px;line-height:16px;color:#000;">例子<i class="c"><b style="transform:scaleX(0.89)">2</b></i><i class="c"><b>:</b></i></div>
<div class="t ss" style="left:948px;top:422.0px;font-size:12px;line-height:16px;color:#000;"><i class="c"><b style="transform:scaleX(0.79)">&lt;</b></i><i class="c"><b style="transform:scaleX(0.8)">S</b></i><i class="c"><b style="transform:scaleX(0.62)">Q</b></i><i class="c"><b style="transform:scaleX(0.73)">L</b></i><i class="c"><b style="transform:scaleX(0.79)">&gt;</b></i><i class="c"><b style="transform:scaleX(0.8)">S</b></i><i class="c"><b style="transform:scaleX(0.73)">E</b></i><i class="c"><b style="transform:scaleX(0.73)">L</b></i><i class="c"><b style="transform:scaleX(0.73)">E</b></i><i class="c"><b style="transform:scaleX(0.67)">C</b></i><i class="c"><b style="transform:scaleX(0.73)">T</b></i><i class="c">&nbsp;</i><i class="c"><b style="transform:scaleX(0.89)">*</b></i><i class="c">&nbsp;</i><i class="c"><b style="transform:scaleX(0.8)">F</b></i><i class="c"><b style="transform:scaleX(0.67)">R</b></i><i class="c"><b style="transform:scaleX(0.62)">O</b></i><i class="c"><b style="transform:scaleX(0.5)">M</b></i><i class="c">&nbsp;</i><i class="c"><b style="transform:scaleX(0.89)">k</b></i><i class="c"><b>.</b></i><i class="c"><b style="transform:scaleX(0.89)">x</b></i><i class="c"><b>l</b></i><i class="c"><b>s</b></i><i class="c"><b style="transform:scaleX(0.89)">x</b></i><i class="c"><b style="transform:scaleX(0.79)">&lt;</b></i><i class="c"><b>/</b></i><i class="c"><b style="transform:scaleX(0.8)">S</b></i><i class="c"><b style="transform:scaleX(0.62)">Q</b></i><i class="c"><b style="transform:scaleX(0.73)">L</b></i><i class="c"><b style="transform:scaleX(0.79)">&gt;</b></i></div>
<div class="b" style="left:1308px;top:468px;width:382px;height:291px;background:#f0f0f0;border:1px solid #a3a3a3;border-radius:8px;box-shadow:0 18px 56px rgba(0,0,0,0.30),0 3px 9px rgba(0,0,0,0.13);overflow:hidden"><div class="b" style="left:0;top:0;right:0;height:31px;background:#f9eff1"></div></div>
<div class="t " style="left:1339px;top:474.5px;font-size:12px;line-height:16px;color:#1a1a1a;">数字穷举</div>
<svg class="b" style="left:1316px;top:475px" width="17" height="17" viewBox="142 70 34 34"><path d="M157.5 71l9 4v9l-4 2.5-5-1z" fill="#8a0d0d"/>
    <path d="M162.5 84l12.5 5v9l-8 3.5-5.5-2.5z" fill="#0a8a0a"/>
    <path d="M144 92.5l8-4.5 17 2.5v5.5l-11 5.5-14-4z" fill="#f2f2f2" stroke="#111" stroke-width="1.3" stroke-linejoin="round"/>
    <path d="M144.5 96.5l6.5 5" stroke="#c07a3a" stroke-width="1.6"/>
    <path d="M146.3 71l18 3.8-1.9 16.8-18.4-5z" fill="#eeeeee" stroke="#111" stroke-width="1.3" stroke-linejoin="round"/>
    <path d="M148.3 73.6l11.9 2.5-1.6 11.5-12.1-3.4z" fill="#6b79a3"/>
    <circle cx="153.6" cy="78.3" r="2.5" fill="#a01515"/><circle cx="150" cy="82.4" r="2.5" fill="#e0904a"/><circle cx="155.2" cy="83.4" r="2.5" fill="#11881a"/></svg>
<svg class="b" style="left:1668px;top:477px" width="12" height="12"><path d="M1 1l10 10M11 1L1 11" stroke="#111" stroke-width="1.2"/></svg>
<div class="b" style="left:1320px;top:518px;width:180px;height:162px;border:1px solid #dcdcdc"></div>
<div class="b" style="left:1326px;top:512px;width:64px;height:12px;background:#f0f0f0"></div>
<div class="t ss" style="left:1328px;top:509.0px;font-size:12px;line-height:16px;color:#000;">穷举单元格</div>
<div class="b" style="left:1332px;top:538px;width:157px;height:43px;border:1px solid #dcdcdc"></div>
<div class="b" style="left:1338px;top:532px;width:88px;height:12px;background:#f0f0f0"></div>
<div class="t ss" style="left:1340px;top:529.0px;font-size:12px;line-height:16px;color:#000;">穷举单元格选择</div>
<div class="b" style="left:1338px;top:552px;width:84px;height:21px;background:#f2f2f2;border:1px solid #e3e3e3;border-bottom:2px solid #0a64c8;border-radius:3px"></div>
<div class="b" style="left:1428px;top:550px;width:55px;height:22px;background:#fdfdfd;border:1px solid #d3d3d3;border-bottom-color:#c4c4c4;border-radius:4px"></div>
<div class="t ss" style="left:1432px;top:552.5px;font-size:12px;line-height:16px;color:#000;">选取<i class="c"><b>.</b></i><i class="c"><b>.</b></i><i class="c"><b>.</b></i></div>
<div class="t ss" style="left:1337px;top:594.0px;font-size:12px;line-height:16px;color:#000;">起始数<i class="c"><b>:</b></i></div>
<div class="b" style="left:1390px;top:592px;width:99px;height:22px;background:#fff;border:1px solid #e3e3e3;border-bottom:1px solid #8a8a8a;border-radius:3px"></div>
<div class="t " style="left:1393px;top:593.75px;font-size:11.5px;line-height:15.5px;color:#000;">1</div>
<div class="t ss" style="left:1337px;top:621.0px;font-size:12px;line-height:16px;color:#000;">终止数<i class="c"><b>:</b></i></div>
<div class="b" style="left:1390px;top:619px;width:99px;height:22px;background:#fff;border:1px solid #e3e3e3;border-bottom:1px solid #8a8a8a;border-radius:3px"></div>
<div class="t " style="left:1393px;top:620.75px;font-size:11.5px;line-height:15.5px;color:#000;">10000</div>
<div class="t ss" style="left:1337px;top:648.0px;font-size:12px;line-height:16px;color:#000;">步<i class="c">&nbsp;</i><i class="c">&nbsp;</i>进<i class="c"><b>:</b></i></div>
<div class="b" style="left:1390px;top:646px;width:99px;height:22px;background:#fff;border:1px solid #e3e3e3;border-bottom:1px solid #8a8a8a;border-radius:3px"></div>
<div class="t " style="left:1393px;top:647.75px;font-size:11.5px;line-height:15.5px;color:#000;">1</div>
<div class="b" style="left:1506px;top:518px;width:174px;height:162px;border:1px solid #dcdcdc"></div>
<div class="b" style="left:1511px;top:512px;width:64px;height:12px;background:#f0f0f0"></div>
<div class="t ss" style="left:1513px;top:509.0px;font-size:12px;line-height:16px;color:#000;">目标单元格</div>
<div class="b" style="left:1512px;top:538px;width:157px;height:43px;border:1px solid #dcdcdc"></div>
<div class="b" style="left:1518px;top:532px;width:88px;height:12px;background:#f0f0f0"></div>
<div class="t ss" style="left:1520px;top:529.0px;font-size:12px;line-height:16px;color:#000;">目标单元格选择</div>
<div class="b" style="left:1519px;top:552px;width:82px;height:21px;background:#f2f2f2;border:1px solid #e3e3e3;border-bottom:1px solid #8a8a8a;border-radius:3px"></div>
<div class="b" style="left:1608px;top:550px;width:55px;height:22px;background:#fdfdfd;border:1px solid #d3d3d3;border-bottom-color:#c4c4c4;border-radius:4px"></div>
<div class="t ss" style="left:1612px;top:552.5px;font-size:12px;line-height:16px;color:#000;">选取<i class="c"><b>.</b></i><i class="c"><b>.</b></i><i class="c"><b>.</b></i></div>
<div class="b" style="left:1518px;top:601px;width:151px;height:73px;border:1px solid #dcdcdc"></div>
<div class="b" style="left:1524px;top:595px;width:40px;height:12px;background:#f0f0f0"></div>
<div class="t ss" style="left:1526px;top:592.0px;font-size:12px;line-height:16px;color:#000;">目标值</div>
<svg class="b" style="left:1525px;top:622px" width="14" height="14"><circle cx="7" cy="7" r="6.5" fill="#0a5fc0"/><circle cx="7" cy="7" r="3" fill="#fff"/></svg>
<div class="t ss" style="left:1542px;top:621.0px;font-size:12px;line-height:16px;color:#000;">最小值</div>
<svg class="b" style="left:1590px;top:622px" width="14" height="14"><circle cx="7" cy="7" r="6" fill="#f6f6f6" stroke="#5c5c5c"/></svg>
<div class="t ss" style="left:1607px;top:621.0px;font-size:12px;line-height:16px;color:#000;">最大值</div>
<svg class="b" style="left:1524px;top:650px" width="14" height="14"><circle cx="7" cy="7" r="6" fill="#f6f6f6" stroke="#5c5c5c"/></svg>
<div class="t ss" style="left:1541px;top:649.0px;font-size:12px;line-height:16px;color:#000;">目标值<i class="c"><b>:</b></i></div>
<div class="b" style="left:1591px;top:648px;width:72px;height:19px;background:#f0f0f0;border:1px solid #e3e3e3;border-bottom:1px solid #e3e3e3;border-radius:3px"></div>
<div class="t " style="left:1594px;top:648.25px;font-size:11.5px;line-height:15.5px;color:#8a8a8a;">5</div>
<div class="b" style="left:1465px;top:689px;width:103px;height:35px;background:#fdfdfd;border:1px solid #d3d3d3;border-bottom-color:#c4c4c4;border-radius:4px"></div>
<div class="t ss" style="left:1492.0px;top:698.0px;font-size:12px;line-height:16px;color:#000;">开始计算</div>
<div class="b" style="left:1576px;top:689px;width:103px;height:35px;background:#fdfdfd;border:1px solid #d3d3d3;border-bottom-color:#c4c4c4;border-radius:4px"></div>
<div class="t ss" style="left:1615.0px;top:698.0px;font-size:12px;line-height:16px;color:#000;">关闭</div>
<div class="b" style="left:1320px;top:731px;width:361px;height:24px;background:#e6e6e6;border:1px solid #c9c9c9"></div></body></html>
